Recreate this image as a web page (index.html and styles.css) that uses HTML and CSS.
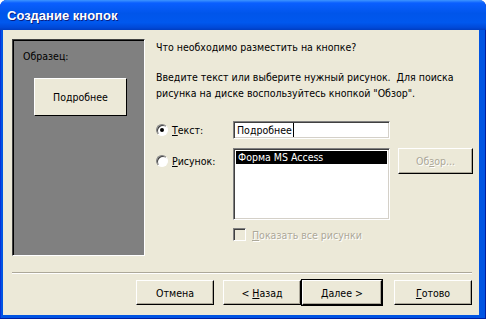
FILE: index.html
```html
<!DOCTYPE html>
<html lang="ru">
<head>
    <meta charset="UTF-8">
    <title>Создание кнопок</title>
    <link rel="stylesheet" href="styles.css">
</head>
<body>
    <div class="window">
        <div class="titlebar"><span class="title">Создание кнопок</span></div>
        <div class="client">
            <div class="main">
                <div class="sample">
                    <div class="sample-label">Образец:</div>
                    <div class="sample-btn">Подробнее</div>
                </div>
                <div class="content">
                    <p class="question">Что необходимо разместить на кнопке?</p>
                    <p class="hint">Введите текст или выберите нужный рисунок.&nbsp; Для поиска<br>рисунка на диске воспользуйтесь кнопкой "Обзор".</p>
                    <div class="form">
                        <label class="opt opt-text"><span class="radio checked"></span><span><u>Т</u>екст:</span></label>
                        <div class="textbox"><span>Подробнее</span><span class="caret"></span></div>
                        <span></span>

                        <label class="opt opt-pic"><span class="radio"></span><span><u>Р</u>исунок:</span></label>
                        <div class="listbox"><div class="item selected">Форма MS Access</div></div>
                        <div class="btn browse disabled"><span>Об<u>з</u>ор...</span></div>

                        <span></span>
                        <label class="check disabled"><span class="box"></span><span><u>П</u>оказать все рисунки</span></label>
                        <span></span>
                    </div>
                </div>
            </div>
            <div class="sep"></div>
            <div class="buttons">
                <div class="btn"><span>Отмена</span></div>
                <div class="btn back"><span>&lt; <u>Н</u>азад</span></div>
                <div class="btn default"><span><u>Д</u>алее &gt;</span></div>
                <div class="btn done"><span><u>Г</u>отово</span></div>
            </div>
        </div>
    </div>
</body>
</html>
```

FILE: styles.css
```css
body{margin:0; background:#fff; font-family:"DejaVu Sans Condensed","DejaVu Sans",sans-serif; font-stretch:condensed; font-size:10.5px; color:#000;}

.window{width:486px; height:319px; background:#0054e3; border-radius:7px 7px 0 0; display:flex; flex-direction:column; box-sizing:border-box; box-shadow:inset -1px -1px 0 #001ea0, inset 1px 0 0 #0831d9;}

.titlebar{height:30px; flex:none; border-radius:7px 7px 0 0; background:linear-gradient(#3d95ff 0%, #0a5fff 10%, #0055ea 45%, #0058ee 75%, #0049d8 92%, #003dc0 100%); display:flex; align-items:center; padding:0 7px; box-sizing:border-box;}
.title{font-family:"Liberation Sans",sans-serif; font-stretch:normal; font-weight:bold; font-size:13px; color:#fff; text-shadow:1px 1px 0 #0a1e80; padding-top:1px;}

.client{flex:1; margin:0 7px 4px 3px; background:#ece9d8; padding:9px 7px 0 9px; display:flex; flex-direction:column;}

.main{display:flex; height:217px; gap:11px;}

.sample{flex:none; width:133px; box-sizing:border-box; background:#808080; border-top:1px solid #404040; border-left:1px solid #404040; border-right:1px solid #fff; border-bottom:1px solid #fff; box-shadow:inset 1px 1px 0 #000; padding:10px 0 0 10px;}
.sample-label{line-height:13px;}
.sample-btn{width:93px; height:38px; margin:15px 0 0 11px; box-sizing:border-box; background:#ece9d8; border-top:1px solid #fff; border-left:1px solid #fff; border-right:1px solid #000; border-bottom:1px solid #000; display:flex; align-items:center; justify-content:center;}

.content{flex:1; min-width:0;}
.question{margin:0; line-height:16px;}
.hint{margin:14px 0 0; line-height:16px;}

.form{display:grid; grid-template-columns:77px 157px 1fr; margin-top:20px;}
.opt{display:flex; align-items:center; gap:4px;}
.opt-text{height:18px;}
.opt-pic{align-self:start; margin-top:15px; height:14px;}
.radio{width:12px; height:12px; border-radius:50%; background:#fff; box-sizing:border-box; border:1px solid; border-color:#808080 #fff #fff #808080; box-shadow:inset 1px 1px 0 #404040; position:relative; flex:none;}
.radio.checked::after{content:""; position:absolute; left:3px; top:3px; width:4px; height:4px; border-radius:50%; background:#000;}

.textbox{height:18px; box-sizing:border-box; background:#fff; border:1px solid; border-color:#808080 #fff #fff #808080; box-shadow:inset 1px 1px 0 #404040, inset -1px -1px 0 #d4d0c8; padding:2px 3px; line-height:13px; display:flex; align-items:center;}
.caret{display:inline-block; width:1px; height:14px; background:#000; margin-left:1px;}

.listbox{height:72px; margin-top:9px; box-sizing:border-box; background:#fff; border:1px solid; border-color:#808080 #fff #fff #808080; box-shadow:inset 1px 1px 0 #404040, inset -1px -1px 0 #d4d0c8; padding:2px;}
.item{line-height:13px; padding:0 2px;}
.item.selected{background:#000; color:#fff;}

.btn{height:25px; box-sizing:border-box; background:#ece9d8; border:1px solid; border-color:#fff #000 #000 #fff; box-shadow:inset -1px -1px 0 #aca899; display:flex; align-items:center; justify-content:center;}
.btn.disabled{color:#aca899; text-shadow:1px 1px 0 #fff;}
.browse{margin:9px 0 0 8px; width:75px; height:26px;}

.check{grid-column:2 / 4; display:flex; align-items:center; gap:6px; margin-top:8px; height:13px;}
.check.disabled{color:#aca899; text-shadow:1px 1px 0 #fff;}
.box{width:13px; height:13px; box-sizing:border-box; border:1px solid; border-color:#808080 #fff #fff #808080; box-shadow:inset 1px 1px 0 #404040; flex:none;}

.sep{height:0; margin-top:16px; border-top:1px solid #aca899; border-bottom:1px solid #fff;}

.buttons{display:flex; justify-content:flex-end; margin-top:6px;}
.buttons .btn{width:78px;}
.back{margin-left:9px;}
.buttons .default{width:80px; margin-left:1px; box-shadow:inset -1px -1px 0 #aca899, 0 0 0 1px #000;}
.done{margin-left:12px;}
```
